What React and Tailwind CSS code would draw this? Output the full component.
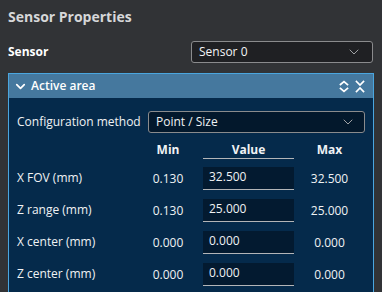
import React from "react";
import { ChevronDown } from "lucide-react";

const rows = [
  { label: "X FOV (mm)", min: "0.130", value: "32.500", max: "32.500" },
  { label: "Z range (mm)", min: "0.130", value: "25.000", max: "25.000" },
  { label: "X center (mm)", min: "0.000", value: "0.000", max: "0.000" },
  { label: "Z center (mm)", min: "0.000", value: "0.000", max: "0.000" },
];

function UpDown() {
  return (
    <svg width="10" height="13" viewBox="0 0 10 13" fill="none" stroke="currentColor" strokeWidth="1.7" strokeLinecap="square">
      <path d="M1.5 4.5 L5 1.5 L8.5 4.5" />
      <path d="M1.5 8.5 L5 11.5 L8.5 8.5" />
    </svg>
  );
}

function DownUp() {
  return (
    <svg width="10" height="13" viewBox="0 0 10 13" fill="none" stroke="currentColor" strokeWidth="1.7" strokeLinecap="square">
      <path d="M1.5 1.5 L5 5 L8.5 1.5" />
      <path d="M1.5 11.5 L5 8 L8.5 11.5" />
    </svg>
  );
}

export default function App() {
  return (
    <div
      className="w-[382px] h-[292px] overflow-hidden bg-[#313336] text-[12px] text-[#f0f2f4]"
      style={{ fontFamily: '"Open Sans", "Noto Sans", sans-serif' }}
    >
      <div className="px-2 pt-[7px] h-[28px] text-[14px] font-bold leading-[20px] text-[#d6d7d9]">
        Sensor Properties
      </div>
      <div className="flex items-center h-[22px] mt-[13px] pl-2">
        <div className="w-[183px] font-bold text-white">Sensor</div>
        <div className="w-[182px] h-[22px] flex items-center justify-between rounded-[3px] border border-[#8a8b8d] bg-[#1f2023] pl-[7px] pr-[10px]">
          <span className="text-[#f3f4f6]">Sensor 0</span>
          <ChevronDown size={16} strokeWidth={1.5} className="text-[#a0a2a5]" />
        </div>
      </div>
      <div className="mx-2 mt-[10px] border border-[#4aa6df] bg-[#052a4b] h-[240px]">
        <div className="h-[24px] bg-[#45789e] flex items-center pl-[4px] pr-[8px]">
          <ChevronDown size={15} strokeWidth={2.75} className="text-white" />
          <span className="ml-[3px] font-semibold text-white">Active area</span>
          <div className="ml-auto flex items-center gap-[6px] text-white">
            <UpDown />
            <DownUp />
          </div>
        </div>
        <div className="pl-[8px] pr-[8px] pt-[13px]">
          <div className="flex items-center h-[22px]">
            <div className="w-[131px]">Configuration method</div>
            <div className="flex-1 h-[22px] flex items-center justify-between rounded-[3px] border border-[#8a8b8d] bg-[#03182c] pl-[7px] pr-[8px]">
              <span>Point / Size</span>
              <ChevronDown size={16} strokeWidth={1.5} className="text-[#a0a2a5]" />
            </div>
          </div>
          <div className="flex items-start h-[18px] mt-[8px] font-bold">
            <div className="w-[131px]" />
            <div className="w-[40px] text-center leading-[18px]">Min</div>
            <div className="w-[15px]" />
            <div className="w-[91px] h-[18px] text-center leading-[17px] border-b border-[#b3b5b8]">Value</div>
            <div className="flex-1 text-center leading-[18px]">Max</div>
          </div>
          <div className="flex flex-col gap-[9px] mt-[8px]">
            {rows.map((r) => (
              <div key={r.label} className="flex items-center h-[23px]">
                <div className="w-[131px] -mt-[2px]">{r.label}</div>
                <div className="w-[40px] text-center">{r.min}</div>
                <div className="w-[15px]" />
                <div className="w-[91px] h-[23px] bg-[#031a30] border-b border-[#b3b5b8] pl-[6px] flex items-center">
                  <span className="-mt-[2px]">{r.value}</span>
                </div>
                <div className="flex-1 text-center">{r.max}</div>
              </div>
            ))}
          </div>
        </div>
      </div>
    </div>
  );
}
